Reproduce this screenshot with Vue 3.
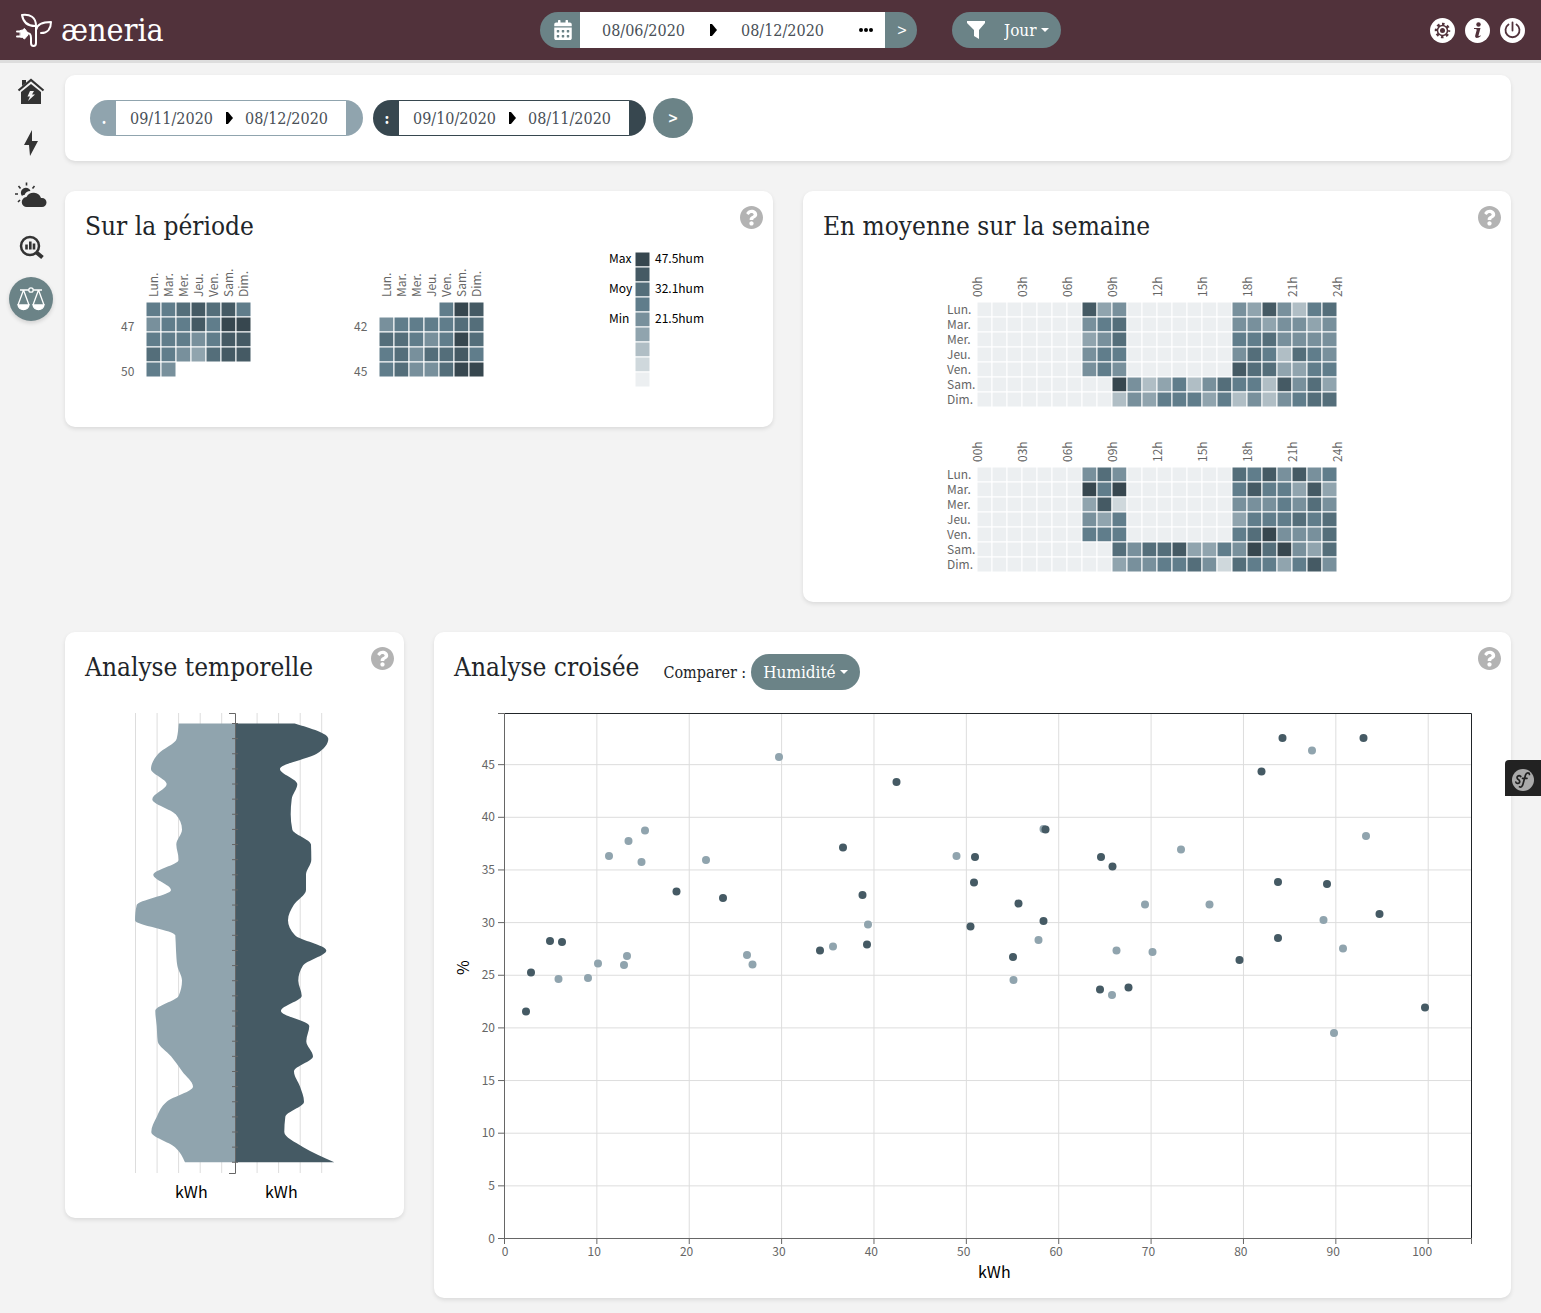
<script setup>
const palette = ['#eceff1', '#cfd8dc', '#b0bec5', '#90a4ae', '#78909c', '#607d8b', '#546e7a', '#455a64', '#37474f']
const days = ['Lun.', 'Mar.', 'Mer.', 'Jeu.', 'Ven.', 'Sam.', 'Dim.']
const hours = ['00h', '03h', '06h', '09h', '12h', '15h', '18h', '21h', '24h']

// One digit per cell: index in the palette, "-" when there is no data.
const calendars = [
  { rows: ['5567675', '4557588', '5554577', '6543677', '54'], weeks: [[1, '47'], [4, '50']] },
  { rows: ['----587', '4555566', '6654586', '5646675', '5644688'], weeks: [[1, '42'], [4, '45']] },
]
const weekMaps = [
  [
    '000000073400000004374256',
    '000000045600000004434434',
    '000000034600000005564444',
    '000000045500000004652654',
    '000000045400000007663355',
    '000000000842352465527463',
    '000000000243555352424566',
  ],
  [
    '000000046400000006574745',
    '000000085800000005755373',
    '000000037100000004445464',
    '000000043500000003555656',
    '000000055500000005684446',
    '000000000646673354868436',
    '000000000344556416553574',
  ],
]
const legend = [['Max', '47.5hum'], null, ['Moy', '32.1hum'], null, ['Min', '21.5hum'], null, null, null, null]

function cells(rows, x0, y0) {
  return rows.flatMap((row, r) =>
    [...row].flatMap((c, i) => (c === '-' ? [] : [{ x: x0 + i * 15, y: y0 + r * 15, fill: palette[c] }])))
}

// Mirrored area chart, one sample every `step` pixels downwards.
const top = 723.5
const step = 15.13
const axisX = 235.5
const leftSeries = [178.7, 176.7, 158.3, 151, 166.7, 152.3, 175.7, 182, 176.3, 178.7, 153.3, 171, 136.7, 135, 175.3, 176, 177.3, 182, 178.7, 155.3, 156.7, 157.7, 171, 182.3, 193, 166.7, 156.7, 151.3, 175, 185]
const rightSeries = [294.7, 328.3, 316.7, 280, 297.3, 291.7, 290.7, 292.3, 311, 311.3, 306, 306, 293.7, 288, 295, 326.3, 303, 298.3, 301.7, 281, 309.3, 306.3, 313, 294, 300, 304, 285.3, 284.3, 303.3, 334.3]
const gridX = [135.5, 157.1, 178.6, 200.2, 221.7, 257.1, 278.6, 300.2, 321.7]

// Monotone cubic interpolation along y.
function area(xs) {
  const n = xs.length
  const s = xs.slice(1).map((x, i) => (x - xs[i]) / step)
  const t = xs.map((_, i) => {
    if (i === 0 || i === n - 1) return 0
    const a = s[i - 1]
    const b = s[i]
    return (Math.sign(a) + Math.sign(b)) * Math.min(Math.abs(a), Math.abs(b), Math.abs(a + b) / 4)
  })
  t[0] = (3 * s[0] - t[1]) / 2
  t[n - 1] = (3 * s[n - 2] - t[n - 2]) / 2
  const d = step / 3
  let path = `M${axisX} ${top}L${xs[0]} ${top}`
  for (let i = 1; i < n; i++) {
    const y0 = top + (i - 1) * step
    const y1 = top + i * step
    path += `C${xs[i - 1] + d * t[i - 1]} ${y0 + d} ${xs[i] - d * t[i]} ${y1 - d} ${xs[i]} ${y1}`
  }
  return path + `L${axisX} ${top + (n - 1) * step}Z`
}
const leftArea = area(leftSeries)
const rightArea = area(rightSeries)
const timeTicks = leftSeries.map((_, i) => top + i * step)

const xTicks = Array.from({ length: 11 }, (_, i) => ({ label: i * 10, pos: 504.5 + i * 92.37 }))
const yTicks = Array.from({ length: 10 }, (_, i) => ({ label: i * 5, pos: 1238.5 - i * 52.65 }))
const lightDots = [[779, 757], [645, 830.5], [628.5, 841], [609, 856], [641.5, 862], [706, 860], [627, 956], [624, 965], [598, 963.5], [558.5, 979], [588, 978], [747, 955], [752.5, 964.5], [833, 946.5], [868, 924.5], [956.5, 856], [1043.5, 829], [1038.5, 940], [1013.5, 980], [1112, 995], [1116.5, 950.5], [1152.5, 952], [1145, 904.5], [1209.5, 904.5], [1181, 849.5], [1312, 750.5], [1366, 836], [1323.5, 920], [1343, 948.5], [1334, 1033]]
const darkDots = [[896.5, 782], [843, 847.5], [676.5, 891.5], [723, 898], [550, 941], [562, 942], [531, 972.5], [526, 1011.5], [820, 950.5], [862.5, 895], [867, 944.5], [975, 857], [974, 882.5], [970.5, 926.5], [1018.5, 903.5], [1043.5, 921], [1045.5, 829.5], [1013, 957], [1100, 989.5], [1128.5, 987.5], [1101, 857], [1112.5, 866.5], [1282.5, 738], [1261.5, 771.5], [1363.5, 738], [1278, 882], [1327, 884], [1278, 938], [1239.5, 960], [1379.5, 914], [1425, 1007.5]]

const helpPath = 'M504 256c0 136.997-111.043 248-248 248S8 392.997 8 256C8 119.083 119.043 8 256 8s248 111.083 248 248zM262.655 90c-54.497 0-89.255 22.957-116.549 63.758-3.536 5.286-2.353 12.415 2.715 16.258l34.699 26.31c5.205 3.947 12.621 3.008 16.665-2.122 17.864-22.658 30.113-35.797 57.303-35.797 20.429 0 45.698 13.148 45.698 32.958 0 14.976-12.363 22.667-32.534 33.976C247.128 238.528 216 254.941 216 296v4c0 6.627 5.373 12 12 12h56c6.627 0 12-5.373 12-12v-1.333c0-28.462 83.186-29.647 83.186-106.667 0-58.002-60.165-102-116.531-102zM256 338c-25.365 0-46 20.635-46 46 0 25.364 20.635 46 46 46s46-20.636 46-46c0-25.365-20.635-46-46-46z'
</script>

<template>
  <div class="page">
    <header class="topbar">
      <a href="#" class="brand" aria-label="æneria">
        <svg width="36" height="34" viewBox="0 0 36 34" fill="none" stroke="#fff" stroke-width="2" stroke-linecap="round" stroke-linejoin="round">
          <path d="M19 13C10 13 7 8 6 2c8-1 14 2 14 11v17c0 4-5 4-5 0v-5c0-4-1-5-4-5" />
          <path d="M20 17c1-6 6-8 15-8 0 6-3 11-10 11" />
          <path d="M1 18.500h4M1 23.500h4" />
          <path d="M4.500 17.500l2-.5 2-1.500 3.500 4.500v2l-3.500 4-2-1.500-2-.5z" fill="#fff" stroke-width="1" />
        </svg>
        <span>æneria</span>
      </a>

      <div class="filters">
        <form class="period main-period" @submit.prevent>
          <span class="cap cal-cap">
            <svg width="18" height="20" viewBox="0 0 448 512" fill="#fff"><path d="M0 464c0 26.500 21.500 48 48 48h352c26.500 0 48-21.500 48-48V192H0v272zm320-196c0-6.600 5.400-12 12-12h40c6.600 0 12 5.400 12 12v40c0 6.600-5.400 12-12 12h-40c-6.600 0-12-5.400-12-12v-40zm0 128c0-6.600 5.400-12 12-12h40c6.600 0 12 5.400 12 12v40c0 6.600-5.400 12-12 12h-40c-6.600 0-12-5.400-12-12v-40zM192 268c0-6.600 5.400-12 12-12h40c6.600 0 12 5.400 12 12v40c0 6.600-5.400 12-12 12h-40c-6.600 0-12-5.400-12-12v-40zm0 128c0-6.600 5.400-12 12-12h40c6.600 0 12 5.400 12 12v40c0 6.600-5.400 12-12 12h-40c-6.600 0-12-5.400-12-12v-40zM64 268c0-6.600 5.400-12 12-12h40c6.600 0 12 5.400 12 12v40c0 6.600-5.400 12-12 12H76c-6.600 0-12-5.400-12-12v-40zm0 128c0-6.600 5.400-12 12-12h40c6.600 0 12 5.400 12 12v40c0 6.600-5.400 12-12 12H76c-6.600 0-12-5.400-12-12v-40zM400 64h-48V16c0-8.800-7.200-16-16-16h-32c-8.800 0-16 7.200-16 16v48H160V16c0-8.800-7.200-16-16-16h-32c-8.800 0-16 7.200-16 16v48H48C21.500 64 0 85.500 0 112v48h448v-48c0-26.500-21.500-48-48-48z" /></svg>
          </span>
          <div class="dates">
            <input type="text" value="08/06/2020" aria-label="Début">
            <svg width="7" height="12" viewBox="0 0 7 12"><path d="M0 0h2l5 6-5 6H0z" /></svg>
            <input type="text" value="08/12/2020" aria-label="Fin">
            <button type="button" class="more" aria-label="Périodes">
              <svg width="14" height="4" viewBox="0 0 14 4"><circle cx="2" cy="2" r="2" /><circle cx="7" cy="2" r="2" /><circle cx="12" cy="2" r="2" /></svg>
            </button>
          </div>
          <button type="submit" class="cap go">&gt;</button>
        </form>

        <label class="granularity">
          <svg width="18" height="18" viewBox="0 0 18 18" fill="#fff"><path d="M0 0h18v2l-6 7v9l-5-3V9L0 2z" /></svg>
          <select aria-label="Granularité"><option>Jour</option></select>
          <span class="caret"></span>
        </label>
      </div>

      <div class="actions">
        <a href="#" aria-label="Configuration">
          <svg width="25" height="25" viewBox="0 0 25 25">
            <g fill="none" stroke="#51323b">
              <circle cx="12.500" cy="12.500" r="5" stroke-width="1.500" />
              <circle cx="12.500" cy="12.500" r="6.500" stroke-width="2.500" stroke-dasharray="2.550 2.555" stroke-dashoffset="1.275" />
            </g>
            <circle cx="12.500" cy="12.500" r="2.500" fill="#51323b" />
          </svg>
        </a>
        <a href="#" aria-label="Aide">
          <svg width="25" height="25" viewBox="0 0 25 25" fill="#51323b"><circle cx="13.500" cy="6.500" r="2.200" /><path d="M9 10h6.500l-2 7.500c-.2.900.6.700 1.800-.3l.5.900c-2.700 2.700-6.300 2.700-5.600-.5l1.500-5.600c.1-.8-.3-1-2.700-1z" /></svg>
        </a>
        <a href="#" aria-label="Déconnexion">
          <svg width="25" height="25" viewBox="0 0 25 25" fill="none" stroke="#51323b" stroke-width="1.800" stroke-linecap="round"><path d="M12.500 4.500v8M8.500 6.500a7 7 0 1 0 8 0" /></svg>
        </a>
      </div>
    </header>

    <div class="layout">
      <nav class="side">
        <a href="#" aria-label="Tableau de bord">
          <svg width="28" height="28" viewBox="0 0 28 28" fill="#333"><path d="M5 9V3h4v3z" /><path d="M1.500 13.500L14 3l12.500 10.500" fill="none" stroke="#333" stroke-width="2.200" /><path d="M4 15L14 7l10 8v12H4z" /><path d="M13 14h4l-2 3.500h3L11 24l2-4.500h-2.500z" fill="#f3f3f3" /></svg>
        </a>
        <a href="#" aria-label="Électricité">
          <svg width="16" height="28" viewBox="0 0 16 28" fill="#333"><path d="M9 1L1 16h5L7 27l8-15H9z" /></svg>
        </a>
        <a href="#" aria-label="Météo">
          <svg width="34" height="28" viewBox="0 0 34 28" fill="#333"><path d="M13 26a5 5 0 0 1-.5-10 8 8 0 0 1 14.500 1h1a4.500 4.500 0 0 1 0 9z" /><path d="M8 15a5 5 0 1 1 8.500-5c-3 0-5 1.500-6 4-1 0-2 .4-2.500 1z" /><path d="M12.500 1.500v3M4.500 5l2 2.500M20.500 5l-2 2.500M1 13h3M4 21l2-2" stroke="#333" stroke-width="1.600" fill="none" /></svg>
        </a>
        <a href="#" aria-label="Analyse">
          <svg width="28" height="28" viewBox="0 0 28 28" fill="none" stroke="#333"><circle cx="13" cy="13" r="9" stroke-width="2.500" /><path d="M19.500 19.500l6 5" stroke-width="4" /><path d="M9.500 16.500v-5M13.300 16.500V8.500M17 16.500v-6" stroke-width="2.600" /></svg>
        </a>
        <a href="#" class="active" aria-label="Comparaison">
          <svg width="30" height="26" viewBox="0 0 30 26" fill="none" stroke="#fff" stroke-width="1.300"><circle cx="15" cy="4" r="2.200" /><path d="M4 4h8.800M17.200 4H26M7.500 4L2 19M7.500 4L13 19M22.500 4L17 19M22.500 4L28 19" /><path d="M2 19h11c-1 6-10 6-11 0zM17 19h11c-1 6-10 6-11 0z" fill="#fff" /></svg>
        </a>
      </nav>

      <main class="board">
        <section class="card compare">
          <form class="period light" @submit.prevent>
            <span class="cap">.</span>
            <div class="dates">
              <input type="text" value="09/11/2020" aria-label="Début, première période">
              <svg width="7" height="12" viewBox="0 0 7 12"><path d="M0 0h2l5 6-5 6H0z" /></svg>
              <input type="text" value="08/12/2020" aria-label="Fin, première période">
            </div>
            <span class="end"></span>
          </form>
          <form class="period dark" @submit.prevent>
            <span class="cap">:</span>
            <div class="dates">
              <input type="text" value="09/10/2020" aria-label="Début, seconde période">
              <svg width="7" height="12" viewBox="0 0 7 12"><path d="M0 0h2l5 6-5 6H0z" /></svg>
              <input type="text" value="08/11/2020" aria-label="Fin, seconde période">
            </div>
            <span class="end"></span>
          </form>
          <button type="button" class="round-go">&gt;</button>
        </section>

        <section class="card half">
          <div class="card-head">
            <h2>Sur la période</h2>
            <button type="button" class="help" aria-label="Aide"><svg viewBox="8 8 496 496"><path :d="helpPath" /></svg></button>
          </div>
          <div class="period-charts">
            <svg v-for="(cal, k) in calendars" :key="k" class="grid-chart" width="131" height="155" viewBox="120 251 131 155">
              <text v-for="(d, i) in days" :key="d" :transform="`translate(${158 + i * 15} 297) rotate(-90)`">{{ d }}</text>
              <text v-for="w in cal.weeks" :key="w[1]" x="121" :y="316 + w[0] * 15">{{ w[1] }}</text>
              <rect v-for="(c, i) in cells(cal.rows, 146, 302)" :key="i" :x="c.x" :y="c.y" width="15" height="15" :fill="c.fill" />
            </svg>
            <svg class="grid-chart legend" width="101" height="155" viewBox="601 251 101 155">
              <template v-for="(row, i) in legend" :key="i">
                <rect x="635" :y="252 + i * 15" width="15" height="15" :fill="palette[8 - i]" />
                <template v-if="row">
                  <text x="609" :y="263 + i * 15">{{ row[0] }}</text>
                  <text x="655" :y="263 + i * 15">{{ row[1] }}</text>
                </template>
              </template>
            </svg>
          </div>
        </section>

        <section class="card half">
          <div class="card-head">
            <h2>En moyenne sur la semaine</h2>
            <button type="button" class="help" aria-label="Aide"><svg viewBox="8 8 496 496"><path :d="helpPath" /></svg></button>
          </div>
          <div class="week-charts">
            <svg v-for="(map, k) in weekMaps" :key="k" class="grid-chart" width="430" height="165" viewBox="0 0 430 165">
              <text v-for="(h, i) in hours" :key="h" :transform="`translate(${40 + i * 45} 46) rotate(-90)`">{{ h }}</text>
              <text v-for="(d, i) in days" :key="d" x="5" :y="63 + i * 15">{{ d }}</text>
              <rect v-for="(c, i) in cells(map, 35, 51)" :key="i" :x="c.x" :y="c.y" width="15" height="15" :fill="c.fill" />
            </svg>
          </div>
        </section>

        <section class="card quarter">
          <div class="card-head">
            <h2>Analyse temporelle</h2>
            <button type="button" class="help" aria-label="Aide"><svg viewBox="8 8 496 496"><path :d="helpPath" /></svg></button>
          </div>
          <svg class="chart" viewBox="65 692 339 505">
            <path v-for="x in gridX" :key="x" :d="`M${x} 713V1173`" stroke="#ddd" />
            <path :d="leftArea" fill="#90a4ae" />
            <path :d="rightArea" fill="#455a64" />
            <path d="M229 713.500H235.500V1173.500H229" fill="none" stroke="#666" />
            <path v-for="y in timeTicks" :key="y" :d="`M232 ${y}H238`" stroke="#666" />
            <text class="unit" x="175" y="1198">kWh</text>
            <text class="unit" x="265" y="1198">kWh</text>
          </svg>
        </section>

        <section class="card three-quarters">
          <div class="card-head">
            <h2>Analyse croisée</h2>
            <div class="versus">
              <label for="versus">Comparer :</label>
              <span class="select-pill">
                <select id="versus"><option>Humidité</option></select>
                <span class="caret"></span>
              </span>
            </div>
            <button type="button" class="help" aria-label="Aide"><svg viewBox="8 8 496 496"><path :d="helpPath" /></svg></button>
          </div>
          <svg class="chart" viewBox="434 692 1077 585">
            <g stroke="#ddd">
              <path v-for="t in xTicks.slice(1)" :key="t.label" :d="`M${t.pos} 713V1238`" />
              <path v-for="t in yTicks.slice(1)" :key="t.label" :d="`M505 ${t.pos}H1471`" />
            </g>
            <path d="M504.500 713.500H1471.500V1238.500" fill="none" stroke="#212529" />
            <path d="M498 713.500H504.500V1238.500M504.500 1238.500H1471.500V1244" fill="none" stroke="#666" />
            <g v-for="t in xTicks" :key="t.label">
              <path :d="`M${t.pos} 1238V1244`" stroke="#666" />
              <text :x="t.pos + 4" y="1256" text-anchor="end">{{ t.label }}</text>
            </g>
            <g v-for="t in yTicks" :key="t.label">
              <path :d="`M498 ${t.pos}H504`" stroke="#666" />
              <text x="495" :y="t.pos + 4" text-anchor="end">{{ t.label }}</text>
            </g>
            <circle v-for="(p, i) in lightDots" :key="'l' + i" :cx="p[0]" :cy="p[1]" r="4" fill="#90a4ae" />
            <circle v-for="(p, i) in darkDots" :key="'d' + i" :cx="p[0]" :cy="p[1]" r="4" fill="#455a64" />
            <text class="unit" x="978" y="1278">kWh</text>
            <text class="unit" transform="translate(469 975) rotate(-90)">%</text>
          </svg>
        </section>
      </main>
    </div>

    <button type="button" class="debug" aria-label="Symfony">
      <svg width="22" height="22" viewBox="0 0 22 22"><circle cx="11" cy="11" r="11" fill="#aaa" /><g fill="none" stroke="#222" stroke-width="1.700" stroke-linecap="round"><path d="M8.800 7.500C6.500 5.500 4 8 5.500 9.800 7 11.200 8.500 12 7.500 13.500 6.500 15 4 14.500 3.800 13" /><path d="M17.500 5.500c0-2-3-2.500-4 .5L11 15c-.6 2.500-2 3.500-3.500 2.800M10.500 9.300h4.500" /></g></svg>
    </button>
  </div>
</template>

<style>
body {
  background: #f3f3f3;
}
</style>

<style scoped>
.page {
  font-family: "DejaVu Serif Condensed", "DejaVu Serif", serif;
  font-size: 16px;
  color: #212529;
}

a {
  color: inherit;
  text-decoration: none;
}

button,
input,
select {
  box-sizing: border-box;
  margin: 0;
  padding: 0;
  border: 0;
  font: inherit;
  background: none;
  color: inherit;
}

button {
  cursor: pointer;
}

.topbar {
  display: grid;
  grid-template-columns: 540px auto 1fr;
  align-items: center;
  height: 60px;
  background: #51323b;
  border-bottom: 3px solid #ddd;
}

.brand {
  display: flex;
  align-items: center;
  gap: 9px;
  padding-left: 16px;
  color: #fff;
  font-size: 32px;
  line-height: 40px;
}

.filters {
  display: flex;
  gap: 35px;
}

.period {
  display: flex;
  height: 36px;
  border-radius: 18px;
  overflow: hidden;
}

.cap {
  display: flex;
  align-items: center;
  justify-content: center;
  box-sizing: border-box;
  width: 26px;
  padding-left: 2px;
  color: #fff;
  font-weight: bold;
}

.dates {
  display: flex;
  align-items: center;
  gap: 12px;
  box-sizing: border-box;
  width: 230px;
  padding: 0 14px;
  background: #fff;
}

.dates input {
  width: 84px;
  height: 30px;
  color: #495057;
}

.main-period {
  background: #6b8387;
}

.main-period .dates {
  gap: 24px;
  width: 305px;
  padding: 0 12px 0 22px;
}

.cal-cap {
  width: 40px;
  padding-left: 5px;
}

.go {
  width: 32px;
  font-size: 14px;
  font-weight: normal;
}

.more {
  display: flex;
  margin-left: auto;
}

.granularity,
.select-pill {
  display: flex;
  align-items: center;
  height: 36px;
  border-radius: 18px;
  background: #6b8387;
  color: #fff;
}

.granularity {
  padding: 0 12px 0 15px;
}

.granularity svg {
  margin-right: 19px;
}

.select-pill {
  padding: 0 12px;
}

select {
  appearance: none;
  height: 36px;
  font-size: 17px;
}

.caret {
  margin-left: 4px;
  border: 4px solid transparent;
  border-top-color: #fff;
  border-bottom: 0;
}

.actions {
  display: flex;
  justify-content: flex-end;
  gap: 10px;
  padding-right: 16px;
}

.actions a {
  width: 25px;
  height: 25px;
  border-radius: 50%;
  background: #fff;
}

.layout {
  display: flex;
}

.side {
  display: flex;
  flex: none;
  flex-direction: column;
  gap: 8px;
  box-sizing: border-box;
  width: 65px;
  padding: 6px 9px 0;
}

.side a {
  display: flex;
  align-items: center;
  justify-content: center;
  width: 44px;
  height: 44px;
  border-radius: 50%;
}

.side .active {
  background: #6b8387;
  box-shadow: 0 2px 4px rgba(0, 0, 0, .15);
}

.board {
  display: grid;
  flex: 1;
  grid-template-columns: repeat(12, 1fr);
  gap: 30px;
  align-items: start;
  padding: 12px 30px 15px 0;
}

.card {
  background: #fff;
  border-radius: 10px;
  box-shadow: 0 2px 4px rgba(0, 0, 0, .1);
  padding-bottom: 21px;
}

.compare {
  display: flex;
  grid-column: span 12;
  align-items: center;
  gap: 10px;
  padding: 23px 25px;
}

.light {
  background: #90a4ae;
}

.dark {
  background: #37474f;
}

.compare .dates {
  height: 34px;
  margin: 1px 0;
}

.end {
  width: 17px;
}

.round-go {
  width: 40px;
  height: 40px;
  margin-left: -3px;
  border-radius: 50%;
  background: #6b8387;
  color: #fff;
  font-size: 14px;
  font-weight: bold;
}

.half {
  grid-column: span 6;
}

.quarter {
  grid-column: span 3;
}

.three-quarters {
  grid-column: span 9;
}

.card-head {
  display: flex;
  align-items: flex-start;
  box-sizing: border-box;
  height: 60px;
  padding: 15px 10px 0 20px;
}

h2 {
  margin: 0;
  font-size: 26px;
  font-weight: normal;
  line-height: 40px;
  white-space: nowrap;
}

.help {
  width: 23px;
  height: 23px;
  margin-left: auto;
}

.help svg {
  display: block;
  fill: #b3b3b3;
}

.versus {
  display: flex;
  align-items: center;
  gap: 5px;
  margin: 7px 0 0 24px;
}

.period-charts {
  display: grid;
  grid-template-columns: repeat(3, 1fr);
  justify-items: center;
  padding: 0 5px 0 4px;
}

.week-charts {
  display: flex;
  flex-direction: column;
  align-items: center;
}

svg text {
  font-family: "Noto Sans CJK SC", "Noto Sans", sans-serif;
  font-size: 12px;
  fill: #666;
}

.grid-chart {
  display: block;
  overflow: visible;
}

.grid-chart rect {
  stroke: #fff;
}

.legend text,
svg .unit {
  fill: #000;
}

.chart {
  display: block;
  width: 100%;
  overflow: visible;
}

svg .unit {
  font-size: 16px;
}

.debug {
  position: fixed;
  top: 760px;
  right: 0;
  display: flex;
  align-items: center;
  justify-content: center;
  width: 36px;
  height: 36px;
  padding-top: 4px;
  border-radius: 4px 0 0 0;
  background: #222;
}
</style>
